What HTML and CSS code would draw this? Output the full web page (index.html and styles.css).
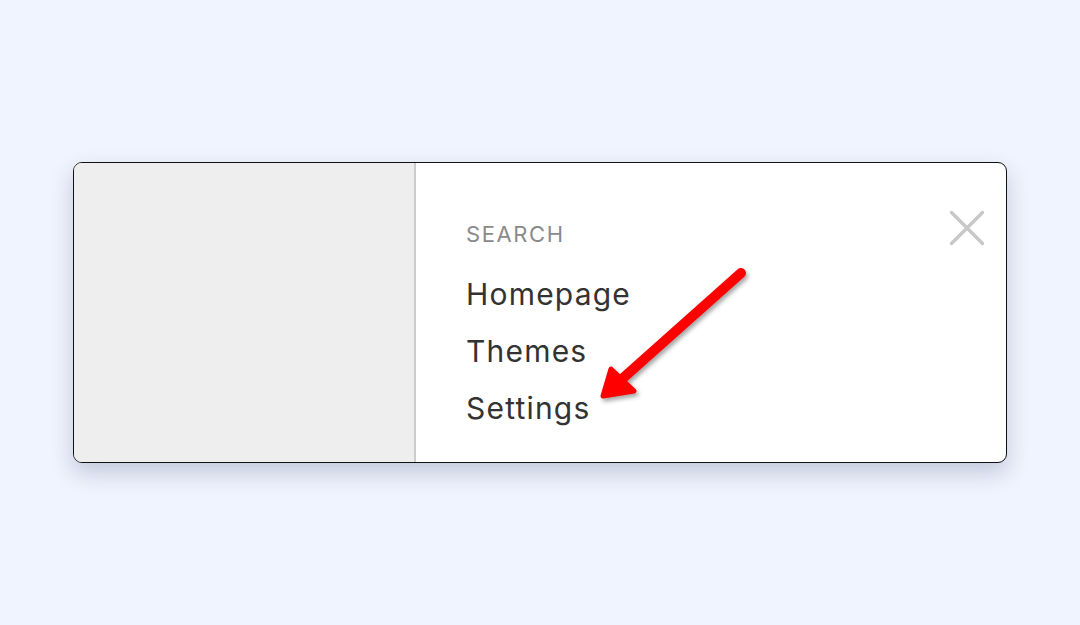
FILE: index.html
```html
<!DOCTYPE html>
<html lang="en">
<head>
<meta charset="utf-8">
<title>Menu</title>
<link rel="stylesheet" href="styles.css">
</head>
<body>
<main class="stage">
  <section class="card">
    <div class="side"></div>
    <nav class="menu">
      <div class="menu-label">SEARCH</div>
      <ul class="menu-list">
        <li class="menu-item">Homepage</li>
        <li class="menu-item">Themes</li>
        <li class="menu-item">Settings</li>
      </ul>
    </nav>
    <button class="close" aria-label="Close">
      <svg viewBox="0 0 36 36" width="36" height="36">
        <path d="M2.5 2.5 L33.5 33.5 M33.5 2.5 L2.5 33.5" stroke="#c8c8c8" stroke-width="3.4" stroke-linecap="round" fill="none"/>
      </svg>
    </button>
    <svg class="arrow" viewBox="590 255 170 155" width="170" height="155">
      <path d="M741 273 L622 379" stroke="#ff0000" stroke-width="10" stroke-linecap="round" fill="none"/>
      <path d="M603 396 L611 369 L634 391 Z" fill="#ff0000" stroke="#ff0000" stroke-width="5" stroke-linejoin="round"/>
    </svg>
  </section>
</main>
</body>
</html>
```

FILE: styles.css
```css
html, body {
  margin: 0;
  padding: 0;
}
body {
  background: #eff4fe;
  font-family: Inter, "Liberation Sans", sans-serif;
}
.stage {
  height: 625px;
  display: flex;
  align-items: center;
  justify-content: center;
}
.card {
  position: relative;
  width: 932px;
  height: 299px;
  border: 1px solid #111;
  border-radius: 9px;
  background: #fff;
  display: flex;
  overflow: hidden;
  box-shadow: 0 10px 22px rgba(40, 50, 90, 0.22);
}
.side {
  width: 340px;
  background: #eeeeee;
  border-right: 2px solid #cccccc;
  flex: none;
}
.menu {
  padding: 56px 0 0 50px;
}
.menu-label {
  font-size: 22px;
  line-height: 30px;
  color: #8a8a8a;
  letter-spacing: 1.6px;
  margin-bottom: 17px;
}
.menu-list {
  list-style: none;
  margin: 0;
  padding: 0;
}
.menu-item {
  font-size: 30px;
  line-height: 57px;
  color: #333333;
  letter-spacing: 1.2px;
}
.close {
  position: absolute;
  top: 47px;
  right: 21px;
  width: 36px;
  height: 36px;
  padding: 0;
  border: 0;
  background: transparent;
}
.close svg {
  display: block;
}
.arrow {
  position: absolute;
  left: 516px;
  top: 92px;
  overflow: visible;
  filter: drop-shadow(2px 3px 2px rgba(0, 0, 0, 0.35));
}
```
